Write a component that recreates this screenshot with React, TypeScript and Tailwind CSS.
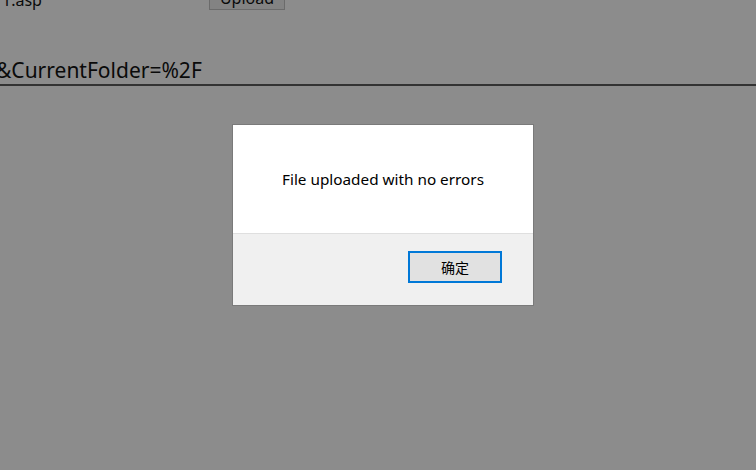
export default function App() {
  return (
    <div className="relative w-[756px] h-[470px] overflow-hidden bg-[#8c8c8c] text-[#0a0a0a]" style={{ fontFamily: '"Noto Sans", "Noto Sans CJK SC", sans-serif' }}>
      {/* page underneath the modal overlay */}
      <div className="flex items-end -mt-[14px] h-[24px]">
        <span className="w-[209px] pl-[2px] text-[16px] leading-[20px]">1.asp</span>
        <button type="button" className="w-[76px] h-[24px] border border-[#6b6b6b] bg-[#838383] text-[16px] leading-[20px]">
          Upload
        </button>
      </div>
      <div className="mt-[47px] -ml-[4px] text-[21px] leading-[27px]">&amp;CurrentFolder=%2F</div>
      <div className="h-[2px] bg-[#333333]" />

      {/* alert dialog */}
      <div className="absolute left-[232px] top-[124px] w-[302px] h-[182px] border border-[#7a7a7a] flex flex-col bg-white">
        <div className="h-[108px] flex items-center justify-center text-[15.3px] text-black">
          File uploaded with no errors
        </div>
        <div className="flex-1 bg-[#f0f0f0] border-t border-[#dfdfdf] flex justify-end items-start pt-[17px] pr-[31px]">
          <button type="button" className="w-[94px] h-[32px] border-2 border-[#0078d7] bg-[#e1e1e1] text-[14px] text-black">
            确定
          </button>
        </div>
      </div>
    </div>
  );
}
